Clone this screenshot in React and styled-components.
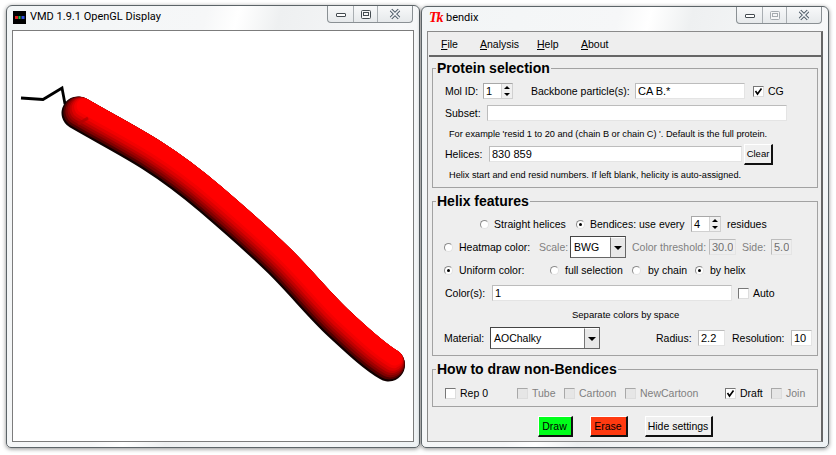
import React from 'react';
import styled, { createGlobalStyle } from 'styled-components';

const GlobalStyle = createGlobalStyle`
    html, body { margin: 0; padding: 0; background: #fff; }
    body { font-family: "Liberation Sans", Arial, sans-serif; font-size: 10.5px; color: #000; }
`;

// Desktop with the two windows side by side
const Desktop = styled.div`
    width: 836px;
    height: 455px;
    overflow: hidden;
    display: flex;
    align-items: flex-start;
    gap: 1px;
    padding: 5px 0 0 6px;
    box-sizing: border-box;
`;

const Window = styled.div`
    width: ${(p) => p.$w}px;
    height: ${(p) => p.$h}px;
    margin-top: ${(p) => p.$top || 0}px;
    box-sizing: border-box;
    display: flex;
    flex-direction: column;
    padding: 0 5px 5px;
    border: 1px solid #5c6468;
    border-radius: 6px 6px 5px 5px;
    box-shadow: 0 1px 4px rgba(0, 0, 0, 0.45);
    background: linear-gradient(105deg, #f2f5f6 0%, #f6f7f8 38%, #ffffff 44%, #eef0f1 52%, #f7f8f9 75%, #eef2f4 100%);
`;

const TitleBar = styled.div`
    height: 24px;
    flex: none;
    display: flex;
    align-items: flex-start;
`;

const TitleIcon = styled.div`
    width: 13px;
    height: 13px;
    margin: 5px 4px 0 1px;
    flex: none;
`;

const TkIcon = styled.span`
    width: 14px;
    margin: 3px 3px 0 2px;
    flex: none;
    font: italic bold 14px/15px "Liberation Serif", serif;
    letter-spacing: -1px;
    color: #f00;
`;

const Title = styled.div`
    flex: 1;
    margin-top: 3px;
    font-family: Roboto, "Liberation Sans", sans-serif;
    font-size: 11px;
    line-height: 16px;
`;

const CaptionButtons = styled.div`
    display: flex;
    height: 16px;
    margin-right: 1px;
    border: 1px solid #8a9094;
    border-top: none;
    border-radius: 0 0 4px 4px;
    background: linear-gradient(#f8f9fa, #e6e9eb);
`;

const CaptionButton = styled.div`
    width: ${(p) => p.$w}px;
    display: flex;
    align-items: center;
    justify-content: center;
    border-left: ${(p) => (p.$first ? 'none' : '1px solid #a9aeb2')};
    box-sizing: border-box;
`;

const Display = styled.div`
    flex: 1;
    background: #fff;
    border: 1px solid #7c7c7c;
    overflow: hidden;
`;

const Panel = styled.div`
    flex: 1;
    background: #eeeeee;
    border: 1px solid #8a8a8a;
    border-right: 2px solid #666;
    box-sizing: border-box;
    padding: 0 3px 0 4px;
`;

const MenuBar = styled.div`
    height: 23px;
    margin: 0 -3px 3px -3px;
    display: flex;
    align-items: center;
    border-bottom: 2px solid #666;
    box-sizing: content-box;
`;

const MenuItem = styled.span`
    margin-left: ${(p) => p.$ml || 0}px;
    width: ${(p) => p.$w}px;
`;

const Group = styled.fieldset`
    margin: 0 0 5px;
    padding: 0;
    min-width: 0;
    border: 1px solid #a2a2a2;
`;

const GroupTitle = styled.legend`
    margin-left: 3px;
    padding: 0 1px;
    font-size: 14px;
    font-weight: bold;
    line-height: 16px;
`;

const GroupBody = styled.div`
    padding: ${(p) => p.$pt}px 0 ${(p) => p.$pb || 0}px;
`;

const Row = styled.div`
    height: ${(p) => p.$h}px;
    display: flex;
    align-items: center;
`;

const Label = styled.span`
    margin-left: ${(p) => p.$ml || 0}px;
    ${(p) => (p.$w ? `width: ${p.$w}px;` : '')}
    flex: none;
    white-space: nowrap;
    color: ${(p) => (p.$off ? '#808080' : '#000')};
`;

const Hint = styled(Label)`
    font-size: ${(p) => p.$fs || 9.2}px;
`;

const Entry = styled.input`
    width: ${(p) => p.$w}px;
    height: 16px;
    margin-left: ${(p) => p.$ml || 0}px;
    flex: none;
    box-sizing: border-box;
    padding: 0 2px;
    font: 11px "Liberation Sans", Arial, sans-serif;
    color: ${(p) => (p.$off ? '#707070' : '#000')};
    background: ${(p) => (p.$off ? '#eeeeee' : '#fff')};
    border: 1px solid #e4e4e4;
    border-top-color: #bcbcbc;
    border-left-color: #bcbcbc;
    outline: none;
`;

const Spin = styled.div`
    width: 30px;
    height: 16px;
    flex: none;
    box-sizing: border-box;
    display: flex;
    background: #fff;
    border: 1px solid #d0d0d0;
    border-top-color: #a8a8a8;
    border-left-color: #a8a8a8;
`;

const SpinValue = styled.span`
    flex: 1;
    padding-left: 2px;
    font-size: 11px;
    line-height: 14px;
`;

const SpinArrows = styled.div`
    width: 10px;
    display: flex;
    flex-direction: column;
    background: #f0f0f0;
    border-left: 1px solid #d4d4d4;
`;

const SpinArrow = styled.span`
    flex: 1;
    display: flex;
    align-items: center;
    justify-content: center;
    &::before {
        content: '';
        border-left: 3px solid transparent;
        border-right: 3px solid transparent;
        ${(p) => (p.$up ? 'border-bottom: 3px solid #000;' : 'border-top: 3px solid #000;')}
    }
`;

const Combo = styled.div`
    width: ${(p) => p.$w}px;
    height: 22px;
    flex: none;
    box-sizing: border-box;
    display: flex;
    padding: 1px;
    background: #fff;
    border: 1px solid #444;
    border-right-color: #666;
    border-bottom-color: #666;
`;

const ComboValue = styled.span`
    flex: 1;
    padding-left: 2px;
    line-height: 18px;
`;

const ComboArrow = styled.span`
    width: 14px;
    display: flex;
    align-items: center;
    justify-content: center;
    background: #e8e8e8;
    border-left: 1px solid #777;
    border-top: 1px solid #fff;
    margin: -1px -1px -1px 0;
    &::before {
        content: '';
        border-left: 4px solid transparent;
        border-right: 4px solid transparent;
        border-top: 4px solid #000;
    }
`;

const Check = styled.span`
    width: 11px;
    height: 11px;
    margin-left: ${(p) => p.$ml || 0}px;
    flex: none;
    box-sizing: border-box;
    display: flex;
    align-items: center;
    justify-content: center;
    background: ${(p) => (p.$off ? '#e6e6e6' : '#fff')};
    border: 1px solid ${(p) => (p.$off ? '#a8a8a8' : '#777')};
    border-right-color: #ddd;
    border-bottom-color: #ddd;
`;

const Radio = styled.span`
    width: 9px;
    height: 9px;
    margin-left: ${(p) => p.$ml || 0}px;
    flex: none;
    box-sizing: border-box;
    border-radius: 50%;
    display: flex;
    align-items: center;
    justify-content: center;
    background: #fff;
    border: 1px solid #8c8c8c;
    border-right-color: #e2e2e2;
    border-bottom-color: #e2e2e2;
    &::before {
        content: '';
        width: 3px;
        height: 3px;
        border-radius: 50%;
        background: ${(p) => (p.$on ? '#000' : 'transparent')};
    }
`;

const TkButton = styled.div`
    width: ${(p) => p.$w}px;
    height: 21px;
    margin-left: ${(p) => p.$ml || 0}px;
    flex: none;
    box-sizing: border-box;
    display: flex;
    align-items: center;
    justify-content: center;
    font-size: ${(p) => p.$fs || 10.5}px;
    background: ${(p) => p.$bg || '#f0f0f0'};
    border: 1px solid #fff;
    border-right: 2px solid #111;
    border-bottom: 2px solid #111;
`;

const Actions = styled.div`
    display: flex;
    justify-content: center;
    gap: 17px;
    padding-top: 4px;
`;

function SpinBox({ value }) {
    return (
        <Spin>
            <SpinValue>{value}</SpinValue>
            <SpinArrows>
                <SpinArrow $up />
                <SpinArrow />
            </SpinArrows>
        </Spin>
    );
}

function CheckBox({ checked, off, ml }) {
    return (
        <Check $off={off} $ml={ml}>
            {checked && (
                <svg width="9" height="9" viewBox="0 0 9 9">
                    <path d="M1.5 4 L3.5 7 L7.5 1.5" fill="none" stroke="#000" strokeWidth="1.6" />
                </svg>
            )}
        </Check>
    );
}

function Caption({ dim }) {
    const c = dim ? '#a6abaf' : '#444b50';
    return (
        <CaptionButtons>
            <CaptionButton $w={25} $first>
                <svg width="12" height="8" viewBox="0 0 12 8">
                    <rect x="1.5" y="3.5" width="9" height="3" rx="0.5" fill="#fff" stroke="#444b50" />
                </svg>
            </CaptionButton>
            <CaptionButton $w={24}>
                <svg width="12" height="11" viewBox="0 0 12 11">
                    <rect x="1.5" y="1.5" width="9" height="8" rx="1" fill="#f6f6f6" stroke={c} />
                    <rect x="3.5" y="3.5" width="5" height="3" fill="none" stroke={c} />
                </svg>
            </CaptionButton>
            <CaptionButton $w={35}>
                <svg width="14" height="12" viewBox="0 0 14 12">
                    <path d="M3 2 L11 10 M11 2 L3 10" stroke="#4c5a66" strokeWidth="3.4" />
                    <path d="M3 2 L11 10 M11 2 L3 10" stroke="#f2f4f6" strokeWidth="1.6" />
                </svg>
            </CaptionButton>
        </CaptionButtons>
    );
}

// Drawn shade by shade, the brighter strokes lean towards the top right edge
const TUBE = 'M78 113 C102 127 129 141 151 155 C173 169 189 181 210 199 C231 217 257.5 240 279 261 C300.5 282 320.5 307 339 324 C357.5 341 372 355 388.5 365';
const SHADES = [
    { color: '#100000', width: 33, off: 0 },
    { color: '#500000', width: 31, off: 1.3 },
    { color: '#800000', width: 28.5, off: 2.5 },
    { color: '#a00000', width: 26, off: 3.8 },
    { color: '#c00000', width: 23.5, off: 5 },
    { color: '#dc0000', width: 21, off: 6.3 },
    { color: '#f20000', width: 18, off: 7.8 },
    { color: '#ff0000', width: 15, off: 9.3 },
];

function Molecule() {
    return (
        <svg width="400" height="410" viewBox="13 31 400 410" style={{ display: 'block' }}>
            <path d="M21 98 L43 99.5 L62 88 L65 104" fill="none" stroke="#000" strokeWidth="2.8" />
            {SHADES.map((s) => (
                <path
                    key={s.color}
                    d={TUBE}
                    fill="none"
                    stroke={s.color}
                    strokeWidth={s.width}
                    strokeLinecap="round"
                    transform={`translate(${s.off * 0.66} ${-s.off * 0.75})`}
                />
            ))}
            <path d="M78 124 L88 118" stroke="#b00000" strokeWidth="3" opacity="0.7" />
        </svg>
    );
}

export default function App() {
    return (
        <>
            <GlobalStyle />
            <Desktop>
                <Window $w={414} $h={443}>
                    <TitleBar>
                        <TitleIcon>
                            <svg width="13" height="13" viewBox="0 0 13 13">
                                <rect width="13" height="13" fill="#000" />
                                <rect x="2" y="5" width="3" height="3" fill="#e02020" />
                                <rect x="5.5" y="5" width="2" height="3" fill="#20c040" />
                                <rect x="8.5" y="5" width="3" height="3" fill="#3050e0" />
                            </svg>
                        </TitleIcon>
                        <Title>VMD 1.9.1 OpenGL Display</Title>
                        <Caption />
                    </TitleBar>
                    <Display>
                        <Molecule />
                    </Display>
                </Window>

                <Window $w={408} $h={442} $top={1}>
                    <TitleBar>
                        <TkIcon>Tk</TkIcon>
                        <Title>bendix</Title>
                        <Caption dim />
                    </TitleBar>
                    <Panel>
                        <MenuBar>
                            <MenuItem $ml={12} $w={39}><u>F</u>ile</MenuItem>
                            <MenuItem $w={57}><u>A</u>nalysis</MenuItem>
                            <MenuItem $w={44}><u>H</u>elp</MenuItem>
                            <MenuItem $w={40}><u>A</u>bout</MenuItem>
                        </MenuBar>

                        <Group>
                            <GroupTitle>Protein selection</GroupTitle>
                            <GroupBody $pt={4} $pb={1}>
                                <Row $h={22}>
                                    <Label $ml={12} $w={38}>Mol ID:</Label>
                                    <SpinBox value="1" />
                                    <Label $ml={18} $w={104}>Backbone particle(s):</Label>
                                    <Entry $w={110} defaultValue="CA B.*" readOnly />
                                    <CheckBox checked ml={8} />
                                    <Label $ml={4}>CG</Label>
                                </Row>
                                <Row $h={22}>
                                    <Label $ml={12} $w={42}>Subset:</Label>
                                    <Entry $w={300} readOnly />
                                </Row>
                                <Row $h={20}>
                                    <Hint $ml={16}>For example 'resid 1 to 20 and (chain B or chain C) '. Default is the full protein.</Hint>
                                </Row>
                                <Row $h={20}>
                                    <Label $ml={12} $w={44}>Helices:</Label>
                                    <Entry $w={253} defaultValue="830 859" readOnly />
                                    <TkButton $w={29} $ml={2} $fs={9.5}>Clear</TkButton>
                                </Row>
                                <Row $h={22}>
                                    <Hint $ml={16}>Helix start and end resid numbers. If left blank, helicity is auto-assigned.</Hint>
                                </Row>
                            </GroupBody>
                        </Group>

                        <Group>
                            <GroupTitle>Helix features</GroupTitle>
                            <GroupBody $pt={4} $pb={2}>
                                <Row $h={22}>
                                    <Radio $ml={47} />
                                    <Label $ml={5} $w={82}>Straight helices</Label>
                                    <Radio $on />
                                    <Label $ml={5} $w={101}>Bendices: use every</Label>
                                    <SpinBox value="4" />
                                    <Label $ml={6}>residues</Label>
                                </Row>
                                <Row $h={24}>
                                    <Radio $ml={11} />
                                    <Label $ml={6} $w={80}>Heatmap color:</Label>
                                    <Label $off $w={31}>Scale:</Label>
                                    <Combo $w={56}>
                                        <ComboValue>BWG</ComboValue>
                                        <ComboArrow />
                                    </Combo>
                                    <Label $off $ml={6} $w={77}>Color threshold:</Label>
                                    <Entry $off $w={27} defaultValue="30.0" readOnly />
                                    <Label $off $ml={6} $w={29}>Side:</Label>
                                    <Entry $off $w={21} defaultValue="5.0" readOnly />
                                </Row>
                                <Row $h={22}>
                                    <Radio $on $ml={11} />
                                    <Label $ml={6} $w={91}>Uniform color:</Label>
                                    <Radio />
                                    <Label $ml={6} $w={67}>full selection</Label>
                                    <Radio />
                                    <Label $ml={7} $w={47}>by chain</Label>
                                    <Radio $on />
                                    <Label $ml={6}>by helix</Label>
                                </Row>
                                <Row $h={24}>
                                    <Label $ml={12} $w={47}>Color(s):</Label>
                                    <Entry $w={240} defaultValue="1" readOnly />
                                    <CheckBox ml={6} />
                                    <Label $ml={4}>Auto</Label>
                                </Row>
                                <Row $h={18}>
                                    <Hint $ml={139} $fs={9.5}>Separate colors by space</Hint>
                                </Row>
                                <Row $h={30}>
                                    <Label $ml={11} $w={46}>Material:</Label>
                                    <Combo $w={110}>
                                        <ComboValue>AOChalky</ComboValue>
                                        <ComboArrow />
                                    </Combo>
                                    <Label $ml={56} $w={42}>Radius:</Label>
                                    <Entry $w={27} defaultValue="2.2" readOnly />
                                    <Label $ml={7} $w={59}>Resolution:</Label>
                                    <Entry $w={21} defaultValue="10" readOnly />
                                </Row>
                            </GroupBody>
                        </Group>

                        <Group>
                            <GroupTitle>How to draw non-Bendices</GroupTitle>
                            <GroupBody $pt={3}>
                                <Row $h={26}>
                                    <CheckBox ml={12} />
                                    <Label $ml={4} $w={57}>Rep 0</Label>
                                    <CheckBox off />
                                    <Label $off $ml={4} $w={32}>Tube</Label>
                                    <CheckBox off />
                                    <Label $off $ml={4} $w={46}>Cartoon</Label>
                                    <CheckBox off />
                                    <Label $off $ml={4} $w={85}>NewCartoon</Label>
                                    <CheckBox checked />
                                    <Label $ml={4} $w={31}>Draft</Label>
                                    <CheckBox off />
                                    <Label $off $ml={4}>Join</Label>
                                </Row>
                            </GroupBody>
                        </Group>

                        <Actions>
                            <TkButton $w={35} $bg="#00ff1a">Draw</TkButton>
                            <TkButton $w={38} $bg="#ff3a10">Erase</TkButton>
                            <TkButton $w={68}>Hide settings</TkButton>
                        </Actions>
                    </Panel>
                </Window>
            </Desktop>
        </>
    );
}
